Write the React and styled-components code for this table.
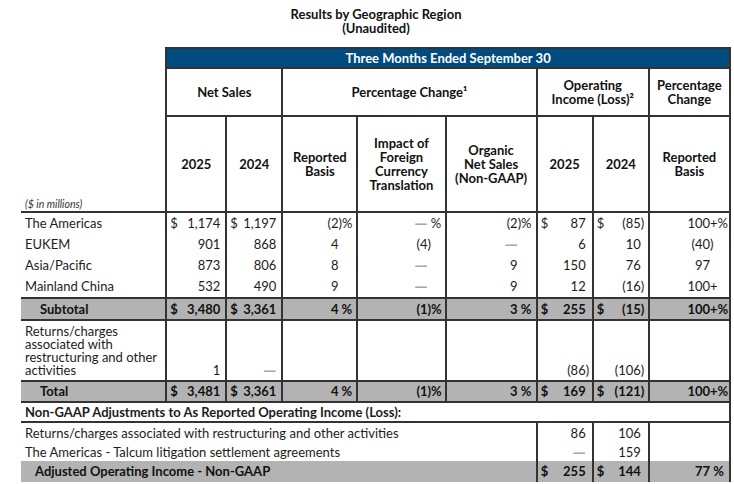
import React from "react";
import styled, { createGlobalStyle } from "styled-components";

const LINE = "#333";

// column widths, width kept for the % / ")" tail, right padding
const COLS = [
  { w: 145 },
  { w: 60, tail: 0, pad: 5 },
  { w: 56, tail: 0, pad: 5 },
  { w: 75, tail: 17, pad: 1 },
  { w: 88, tail: 16, pad: 1 },
  { w: 91, tail: 17, pad: 1 },
  { w: 56, tail: 5, pad: 1 },
  { w: 56, tail: 5, pad: 2 },
  { w: 81, tail: 18, pad: 1 },
];

const regions = [
  ["The Americas", "$1,174", "$1,197", "(2)%", "— %", "(2)%", "$87", "$(85)", "100+%"],
  ["EUKEM", "901", "868", "4", "(4)", "—", "6", "10", "(40)"],
  ["Asia/Pacific", "873", "806", "8", "—", "9", "150", "76", "97"],
  ["Mainland China", "532", "490", "9", "—", "9", "12", "(16)", "100+"],
];

const subtotal = ["Subtotal", "$3,480", "$3,361", "4%", "(1)%", "3%", "$255", "$(15)", "100+%"];
const returns = ["Returns/charges associated with restructuring and other activities", "1", "—", "", "", "", "(86)", "(106)", ""];
const total = ["Total", "$3,481", "$3,361", "4%", "(1)%", "3%", "$169", "$(121)", "100+%"];

const adjustments = [
  { label: "Returns/charges associated with restructuring and other activities", h: 20, cells: ["86", "106", ""] },
  { label: "The Americas - Talcum litigation settlement agreements", h: 18, cells: ["—", "159", ""] },
];
const adjusted = ["Adjusted Operating Income - Non-GAAP", "$255", "$144", "77%"];

const parse = (spec) => {
  if (!spec) return null;
  let s = spec;
  const dollar = s.startsWith("$");
  if (dollar) s = s.slice(1);
  const pct = s.endsWith("%");
  if (pct) s = s.slice(0, -1).trim();
  const plus = s.endsWith("+");
  if (plus) s = s.slice(0, -1);
  const neg = s.startsWith("(");
  if (neg) s = s.slice(1, -1);
  let tail = (neg ? ")" : "") + (plus ? "+" : "");
  if (pct) tail += neg || plus ? "%" : "\u00a0%";
  return { dollar, dash: s === "—", amount: neg ? "(" + s : s, tail };
};

const GlobalStyle = createGlobalStyle`
  body {
    margin: 0;
    background: #fff;
    color: #1c1c1c;
    font-family: "Lato", "Liberation Sans", sans-serif;
  }
`;

const Page = styled.div`
  width: 710px;
  padding: 7px 0 0 21px;
`;

const Title = styled.h1`
  margin: 0 0 12px;
  text-align: center;
  font-size: 13px;
  line-height: 14px;
  font-weight: 700;
  color: #111;
`;

const Table = styled.table`
  border-collapse: collapse;
  table-layout: fixed;
  width: 710px;
  font-size: 13px;
  line-height: 13px;
`;

const Col = styled.col`
  width: ${(p) => p.$w}px;
`;

const Blank = styled.td`
  padding: 0;
`;

const BlueHead = styled.th`
  height: 18px;
  padding: 0;
  background: #004b80;
  color: #fff;
  border: 2px solid ${LINE};
  font-weight: 700;
`;

const HeadCell = styled.th`
  height: ${(p) => p.$h}px;
  padding: 0 2px;
  border: 2px solid ${LINE};
  font-weight: 700;
  line-height: 14px;
  text-align: center;
  vertical-align: middle;
  color: #111;
`;

const Units = styled.td`
  padding: 0 0 0 4px;
  border-bottom: 2px solid ${LINE};
  vertical-align: bottom;
  font-size: 10.5px;
  font-style: italic;
  color: #333;
`;

const Row = styled.tr`
  & > td {
    height: ${(p) => p.$h || 21}px;
    background: ${(p) => (p.$tone ? "#b3b3b3" : "transparent")};
    font-weight: ${(p) => (p.$tone ? 700 : 400)};
    color: ${(p) => (p.$tone ? "#111" : "inherit")};
    ${(p) => p.$tone === "band" && `border-top: 2px solid ${LINE}; border-bottom: 2px solid ${LINE};`}
  }
`;

const Label = styled.td`
  padding: ${(p) => (p.$wrap ? "4px 2px 3px 4px" : "0 4px")};
  padding-left: ${(p) => (p.$indent ? p.$indent : 4)}px;
  vertical-align: ${(p) => (p.$wrap ? "top" : "middle")};
  white-space: ${(p) => (p.$wrap ? "normal" : "nowrap")};
  ${(p) => p.$edge && `border-right: 2px solid ${LINE};`}
  ${(p) => p.$rule && `border-bottom: 2px solid ${LINE};`}
`;

const NumCell = styled.td`
  padding: 0 ${(p) => p.$pad}px ${(p) => (p.$wrap ? 3 : 0)}px 0;
  border-left: 2px solid ${LINE};
  border-right: 2px solid ${LINE};
  vertical-align: ${(p) => (p.$wrap ? "bottom" : "middle")};
`;

const Figure = styled.div`
  display: flex;
  align-items: baseline;
  white-space: nowrap;
`;

const Dollar = styled.span`
  padding-left: 3px;
`;

const Amount = styled.span`
  margin-left: auto;
`;

const Tail = styled.span`
  flex: none;
  width: ${(p) => p.$w}px;
`;

const Dash = styled.span`
  font-family: "DejaVu Sans", sans-serif;
  font-size: 13px;
  font-weight: 700;
  color: #a8a8a8;
`;

const Num = ({ spec, col, wrap }) => {
  const c = COLS[col];
  const f = parse(spec);
  return (
    <NumCell $pad={c.pad} $wrap={wrap}>
      {f && (
        <Figure>
          {f.dollar && <Dollar>$</Dollar>}
          <Amount>{f.dash ? <Dash>—</Dash> : f.amount}</Amount>
          <Tail $w={c.tail}>{f.tail}</Tail>
        </Figure>
      )}
    </NumCell>
  );
};

const DataRow = ({ cells, tone, h, wrap, indent }) => (
  <Row $tone={tone} $h={h}>
    <Label $wrap={wrap} $indent={indent}>
      {cells[0]}
    </Label>
    {cells.slice(1).map((spec, i) => (
      <Num key={i} spec={spec} col={i + 1} wrap={wrap} />
    ))}
  </Row>
);

const App = () => {
  return (
    <>
      <GlobalStyle />
      <Page>
        <Title>
          Results by Geographic Region
          <br />
          (Unaudited)
        </Title>
        <Table>
          <colgroup>
            {COLS.map((c, i) => (
              <Col key={i} $w={c.w} />
            ))}
          </colgroup>
          <thead>
            <tr>
              <Blank />
              <BlueHead colSpan={8}>Three Months Ended September 30</BlueHead>
            </tr>
            <tr>
              <Blank />
              <HeadCell $h={46} colSpan={2}>Net Sales</HeadCell>
              <HeadCell $h={46} colSpan={3}>Percentage Change¹</HeadCell>
              <HeadCell $h={46} colSpan={2}>
                Operating
                <br />
                Income (Loss)²
              </HeadCell>
              <HeadCell $h={46}>
                Percentage
                <br />
                Change
              </HeadCell>
            </tr>
            <tr>
              <Units>($ in millions)</Units>
              <HeadCell $h={94}>2025</HeadCell>
              <HeadCell $h={94}>2024</HeadCell>
              <HeadCell $h={94}>
                Reported
                <br />
                Basis
              </HeadCell>
              <HeadCell $h={94}>
                Impact of
                <br />
                Foreign
                <br />
                Currency
                <br />
                Translation
              </HeadCell>
              <HeadCell $h={94}>
                Organic
                <br />
                Net Sales
                <br />
                (Non-GAAP)
              </HeadCell>
              <HeadCell $h={94}>2025</HeadCell>
              <HeadCell $h={94}>2024</HeadCell>
              <HeadCell $h={94}>
                Reported
                <br />
                Basis
              </HeadCell>
            </tr>
          </thead>
          <tbody>
            {regions.map((r) => (
              <DataRow key={r[0]} cells={r} />
            ))}
            <DataRow cells={subtotal} tone="band" h={20} indent={19} />
            <DataRow cells={returns} h={50} wrap />
            <DataRow cells={total} tone="band" h={19} indent={19} />
            <Row $h={18}>
              <Label colSpan={9} $edge $rule>
                <strong>Non-GAAP Adjustments to As Reported Operating Income (Loss):</strong>
              </Label>
            </Row>
            {adjustments.map((a) => (
              <Row key={a.label} $h={a.h}>
                <Label colSpan={6}>{a.label}</Label>
                {a.cells.map((spec, i) => (
                  <Num key={i} spec={spec} col={i + 6} />
                ))}
              </Row>
            ))}
            <Row $tone="shade" $h={21}>
              <Label colSpan={6} $indent={14}>
                {adjusted[0]}
              </Label>
              {adjusted.slice(1).map((spec, i) => (
                <Num key={i} spec={spec} col={i + 6} />
              ))}
            </Row>
          </tbody>
        </Table>
      </Page>
    </>
  );
};

export default App;
